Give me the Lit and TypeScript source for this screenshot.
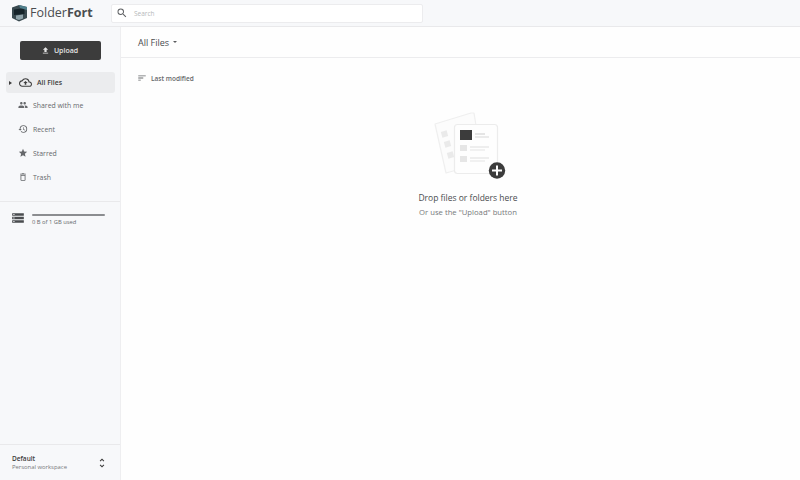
import { LitElement, html, css, svg } from 'lit';
import { customElement } from 'lit/decorators.js';

const ICONS = {
  search: svg`<path d="M15.5 14h-.79l-.28-.27A6.47 6.47 0 0 0 16 9.5 6.5 6.5 0 1 0 9.5 16c1.61 0 3.09-.59 4.23-1.57l.27.28v.79l5 4.99L20.49 19l-4.99-5zm-6 0C7.01 14 5 11.99 5 9.5S7.01 5 9.5 5 14 7.01 14 9.5 11.99 14 9.5 14z"/>`,
  upload: svg`<path d="M5 20h14v-2H5v2zm0-10h4v6h6v-6h4l-7-7-7 7z"/>`,
  cloud: svg`<path d="M19.35 10.04A7.49 7.49 0 0 0 12 4C9.11 4 6.6 5.64 5.35 8.04A5.994 5.994 0 0 0 0 14c0 3.31 2.69 6 6 6h13c2.76 0 5-2.24 5-5 0-2.64-2.05-4.78-4.65-4.96zM19 18H6c-2.21 0-4-1.79-4-4 0-2.05 1.53-3.76 3.56-3.97l1.07-.11.5-.95A5.47 5.47 0 0 1 12 6c2.62 0 4.88 1.86 5.39 4.43l.3 1.5 1.53.11A2.98 2.98 0 0 1 22 15c0 1.65-1.35 3-3 3z"/><path d="M8 13h2.55v3h2.9v-3H16l-4-4z"/>`,
  people: svg`<path d="M16 11c1.66 0 2.99-1.34 2.99-3S17.66 5 16 5s-3 1.34-3 3 1.34 3 3 3zm-8 0c1.66 0 2.99-1.34 2.99-3S9.66 5 8 5 5 6.34 5 8s1.34 3 3 3zm0 2c-2.33 0-7 1.17-7 3.5V19h14v-2.5C15 14.17 10.33 13 8 13zm8 0c-.29 0-.62.02-.97.05 1.16.84 1.97 1.97 1.97 3.45V19h6v-2.5c0-2.33-4.67-3.5-7-3.5z"/>`,
  history: svg`<path d="M13 3a9 9 0 0 0-9 9H1l3.89 3.89.07.14L9 12H6c0-3.87 3.13-7 7-7s7 3.13 7 7-3.13 7-7 7c-1.93 0-3.68-.79-4.94-2.06l-1.42 1.42A8.954 8.954 0 0 0 13 21a9 9 0 0 0 0-18zm-1 5v5l4.28 2.54.72-1.21-3.5-2.08V8H12z"/>`,
  star: svg`<path d="M12 17.27 18.18 21l-1.64-7.03L22 9.24l-7.19-.61L12 2 9.19 8.63 2 9.24l5.46 4.73L5.82 21z"/>`,
  trash: svg`<path d="M6 19c0 1.1.9 2 2 2h8c1.1 0 2-.9 2-2V7H6v12zM8 9h8v10H8V9zm7.5-5-1-1h-5l-1 1H5v2h14V4h-3.5z"/>`,
  storage: svg`<path d="M2 20h20v-4H2v4zm2-3h2v2H4v-2zM2 4v4h20V4H2zm4 3H4V5h2v2zm-4 7h20v-4H2v4zm2-3h2v2H4v-2z"/>`,
  sort: svg`<path d="M3 18h6v-2H3v2zM3 6v2h18V6H3zm0 7h12v-2H3v2z"/>`,
  unfold: svg`<path d="M12 5.83 15.17 9l1.41-1.41L12 3 7.41 7.59 8.83 9 12 5.83zm0 12.34L8.83 15l-1.41 1.41L12 21l4.59-4.59L15.17 15 12 18.17z"/>`,
};

const icon = (name: keyof typeof ICONS, size: number) => html`
  <svg class="icon" width=${size} height=${size} viewBox="0 0 24 24" fill="currentColor">${ICONS[name]}</svg>
`;

const NAV = [
  { label: 'Shared with me', icon: 'people' },
  { label: 'Recent', icon: 'history' },
  { label: 'Starred', icon: 'star' },
  { label: 'Trash', icon: 'trash' },
] as const;

@customElement('app-root')
export class AppRoot extends LitElement {
  static styles = css`
    :host {
      display: flex;
      flex-direction: column;
      width: 800px;
      height: 480px;
      overflow: hidden;
      background: #fefefe;
      color: #3a3a3a;
      font-family: 'Open Sans', 'Liberation Sans', sans-serif;
      font-size: 6.9px;
    }

    .icon { display: block; flex: none; }

    .topbar {
      flex: none;
      height: 27px;
      box-sizing: border-box;
      display: flex;
      align-items: center;
      background: #f7f8fa;
      border-bottom: 1px solid #e9e9eb;
    }
    .brand {
      width: 111px;
      display: flex;
      align-items: center;
      padding-left: 11px;
      box-sizing: border-box;
    }
    .wordmark {
      margin-left: 2px;
      font-size: 12.5px;
      line-height: 26px;
      color: #4a4d50;
    }
    .wordmark b { font-weight: 700; }
    .search {
      width: 312px;
      height: 19px;
      display: flex;
      align-items: center;
      gap: 6px;
      padding-left: 4px;
      box-sizing: border-box;
      background: #fff;
      border: 1px solid #ececee;
      border-radius: 2px;
      color: #5f6164;
    }
    .search span { color: #b6b8ba; font-size: 6.5px; }

    .body { flex: 1; display: flex; min-height: 0; }

    .sidebar {
      flex: none;
      width: 121px;
      box-sizing: border-box;
      display: flex;
      flex-direction: column;
      background: #f7f8fa;
      border-right: 1px solid #eeeef0;
    }
    .upload-wrap { padding: 14px 19px 12px 20px; }
    .upload {
      width: 81px;
      height: 19px;
      display: flex;
      align-items: center;
      justify-content: center;
      gap: 4px;
      padding-right: 2px;
      box-sizing: border-box;
      background: #3c3c3c;
      border-radius: 2px;
      color: #e6e6e6;
      font-weight: 600;
      font-size: 7px;
    }
    .nav { display: flex; flex-direction: column; padding-right: 5px; }
    .item {
      height: 24px;
      display: flex;
      align-items: center;
      gap: 5px;
      padding-left: 18px;
      color: #66686b;
    }
    .item.active {
      height: 21px;
      margin-left: 6px;
      padding-left: 3px;
      gap: 0;
      background: #ebecee;
      border-radius: 3px;
      color: #3c3c3c;
      font-weight: 600;
    }
    .caret {
      width: 0;
      height: 0;
      border-left: 3px solid #3c3c3c;
      border-top: 2.5px solid transparent;
      border-bottom: 2.5px solid transparent;
      margin-right: 7px;
    }
    .item.active .label { margin-left: 5px; }

    .storage {
      margin-top: 12px;
      border-top: 1px solid #e9e9eb;
      padding: 9px 15px 0 11px;
      display: flex;
      gap: 7px;
      color: #4a4c4f;
    }
    .meter { flex: 1; padding-top: 3px; }
    .bar { height: 2px; background: #8b8d90; border-radius: 1px; }
    .meter-text { margin-top: 2px; font-size: 5.8px; color: #66686b; line-height: 9px; }

    .workspace {
      margin-top: auto;
      height: 36px;
      box-sizing: border-box;
      border-top: 1px solid #e9e9eb;
      padding: 0 12px 0 12px;
      display: flex;
      justify-content: space-between;
      align-items: center;
    }
    .ws-name { font-weight: 600; font-size: 6.5px; color: #3c3c3c; line-height: 9px; }
    .ws-sub { font-size: 5.9px; color: #77797c; line-height: 9px; }

    .main { flex: 1; display: flex; flex-direction: column; min-width: 0; }
    .title-row {
      flex: none;
      height: 31px;
      box-sizing: border-box;
      display: flex;
      align-items: center;
      gap: 4px;
      padding-left: 17px;
      border-bottom: 1px solid #ececee;
      font-size: 9px;
      color: #4a4c4f;
    }
    .drop {
      width: 0;
      height: 0;
      border-top: 2.5px solid #5a5c5f;
      border-left: 2.5px solid transparent;
      border-right: 2.5px solid transparent;
    }
    .sort {
      display: flex;
      align-items: center;
      gap: 4px;
      height: 10px;
      padding: 15px 0 0 16px;
      color: #66686b;
      font-weight: 600;
      font-size: 6.5px;
    }
    .empty {
      display: flex;
      flex-direction: column;
      align-items: center;
      margin-top: 27px;
      padding-left: 15px;
    }
    .empty svg { display: block; }
    .empty-title { margin-top: 6px; font-size: 8.5px; line-height: 14px; color: #4a4c4f; }
    .empty-sub { margin-top: 1px; font-size: 7.7px; line-height: 12px; color: #77797c; }
  `;

  render() {
    return html`
      <div class="topbar">
        <div class="brand">
          <svg width="17" height="18" viewBox="0 0 17 18">
            <path d="M1 3.5 8 1l8 2v11l-8 3.5L1 14z" fill="#3a4a50"/>
            <path d="M3 5.5 13.5 4v6L3 11z" fill="#16242a"/>
            <path d="M8 1l8 2v3L9 4z" fill="#4f7f8c"/>
            <path d="M5 11.5l7-1v4l-4 1.5-3-1z" fill="#8fa3aa"/>
          </svg>
          <span class="wordmark">Folder<b>Fort</b></span>
        </div>
        <div class="search">${icon('search', 12)}<span>Search</span></div>
      </div>
      <div class="body">
        <aside class="sidebar">
          <div class="upload-wrap">
            <div class="upload">${icon('upload', 9)}<span>Upload</span></div>
          </div>
          <nav class="nav">
            <div class="item active">
              <span class="caret"></span>${icon('cloud', 13)}<span class="label">All Files</span>
            </div>
            ${NAV.map(n => html`
              <div class="item">${icon(n.icon, 10)}<span>${n.label}</span></div>
            `)}
          </nav>
          <div class="storage">
            ${icon('storage', 14)}
            <div class="meter">
              <div class="bar"></div>
              <div class="meter-text">0 B of 1 GB used</div>
            </div>
          </div>
          <div class="workspace">
            <div>
              <div class="ws-name">Default</div>
              <div class="ws-sub">Personal workspace</div>
            </div>
            ${icon('unfold', 12)}
          </div>
        </aside>
        <main class="main">
          <div class="title-row"><span>All Files</span><span class="drop"></span></div>
          <div class="sort">${icon('sort', 10)}<span>Last modified</span></div>
          <div class="empty">
            <svg width="85" height="75" viewBox="0 0 85 75">
              <path d="M9 14 45 3l3 0 8 50-36 10z" fill="#fcfcfc" stroke="#efefef" stroke-width="1.2" stroke-linejoin="round"/>
              <rect x="15.5" y="21" width="6" height="6" transform="rotate(-15 18.5 24)" fill="#eaeaea"/>
              <rect x="18.5" y="31" width="6" height="6" transform="rotate(-15 21.5 34)" fill="#eaeaea"/>
              <rect x="21.5" y="42" width="6" height="6" transform="rotate(-15 24.5 45)" fill="#eaeaea"/>
              <rect x="28.5" y="14.5" width="43" height="49" rx="3" fill="#fefefe" stroke="#ececec" stroke-width="1.2"/>
              <rect x="34" y="20" width="12" height="10" fill="#3c3c3c"/>
              <rect x="49" y="23.5" width="10" height="1" fill="#cccccc"/>
              <rect x="49" y="26.5" width="14" height="1" fill="#d8d8d8"/>
              <rect x="34" y="35" width="7" height="6" fill="#e6e6e6"/>
              <rect x="44" y="36.5" width="19" height="1" fill="#dddddd"/>
              <rect x="44" y="39.5" width="15" height="1" fill="#e4e4e4"/>
              <rect x="34" y="46" width="7" height="6" fill="#e6e6e6"/>
              <rect x="44" y="47.5" width="19" height="1" fill="#dddddd"/>
              <rect x="44" y="50.5" width="15" height="1" fill="#e4e4e4"/>
              <circle cx="71" cy="60.5" r="8.2" fill="#3c3c3c"/>
              <path d="M70 55.5h2V59.5h4v2h-4v4h-2v-4h-4v-2h4z" fill="#fff"/>
            </svg>
            <div class="empty-title">Drop files or folders here</div>
            <div class="empty-sub">Or use the "Upload" button</div>
          </div>
        </main>
      </div>
    `;
  }
}
